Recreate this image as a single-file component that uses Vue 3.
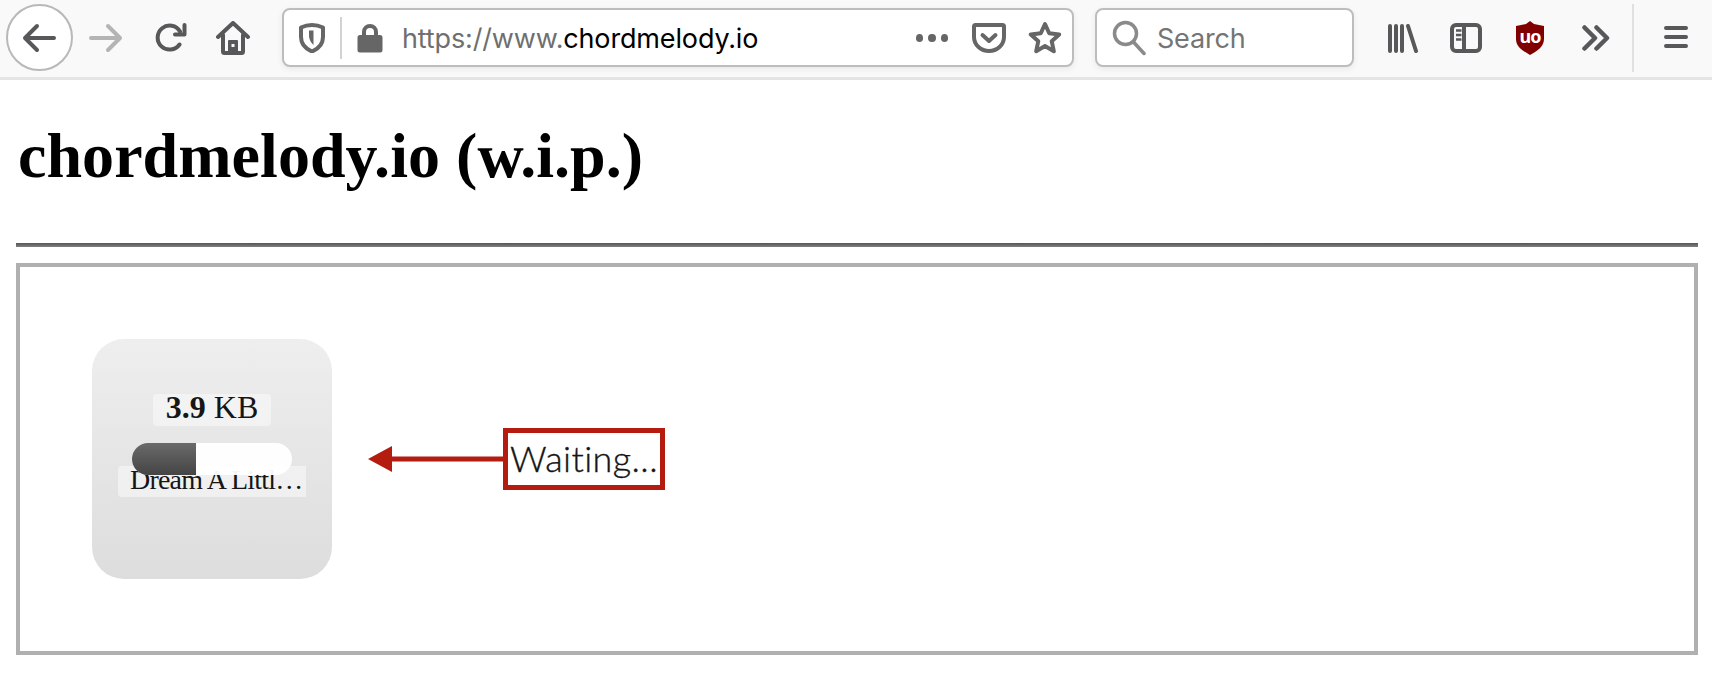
<script setup>
const title = 'chordmelody.io (w.i.p.)'
const progress = 40
</script>

<template>
  <div class="window">
    <header class="toolbar">
      <button class="nav back">
        <svg width="34" height="30" viewBox="0 0 34 30" class="ico"><path d="M32 15H3M15 3L3 15l12 12" /></svg>
      </button>
      <span class="slot forward">
        <svg width="34" height="30" viewBox="0 0 34 30" class="ico faded"><path d="M2 15h29M19 3l12 12-12 12" /></svg>
      </span>
      <span class="slot reload">
        <svg width="32" height="30" viewBox="0 0 32 30" class="ico"><path d="M24.500 21.500A12 12 0 1 1 25 8.500" /><path d="M29.500 2v9.500H20" /></svg>
      </span>
      <span class="slot home">
        <svg width="34" height="34" viewBox="0 0 34 34" class="ico">
          <path d="M2 16L17 2l15 14" />
          <path d="M7 14v16.500a1.500 1.500 0 0 0 1.500 1.500h17a1.500 1.500 0 0 0 1.500-1.500V14" />
          <rect class="solid" x="12" y="19" width="10" height="13" rx="1" />
          <rect class="cut" x="15.500" y="23" width="3" height="3" />
        </svg>
      </span>

      <div class="urlbar">
        <span class="shield">
          <svg width="26" height="30" viewBox="0 0 26 30" class="ico soft">
            <path d="M13 2c4 0 7.500 .8 11 2.500V14c0 7-5 12-11 14.500C7 26 2 21 2 14V4.500C5.500 2.800 9 2 13 2z" />
            <path class="solid-s" d="M14.500 7.500h-4.500V13c0 3 1.800 6.500 4.500 9z" />
          </svg>
        </span>
        <i class="divider"></i>
        <svg class="lock" width="26" height="30" viewBox="0 0 26 30">
          <path fill="#666" d="M5 12V9a8 8 0 0 1 16 0v3h2a2.500 2.500 0 0 1 2.500 2.500V27a2.500 2.500 0 0 1-2.500 2.500H3A2.500 2.500 0 0 1 .5 27V14.500A2.500 2.500 0 0 1 3 12zm4 0h8V9a4 4 0 0 0-8 0z" />
        </svg>
        <span class="url"><span class="scheme">https://www.</span>chordmelody.io</span>
        <span class="dots"><i></i><i></i><i></i></span>
        <svg class="pocket ico soft" width="34" height="30" viewBox="0 0 34 30">
          <path d="M3.500 2h27A1.500 1.500 0 0 1 32 3.500V14c0 8-7 14-15 14S2 22 2 14V3.500A1.500 1.500 0 0 1 3.500 2z" />
          <path d="M10.500 12l6.500 6 6.500-6" />
        </svg>
        <svg class="star ico soft" width="34" height="34" viewBox="0 0 34 34">
          <path d="M17 3l4.200 9.300 10 1.100-7.500 6.800 2.100 10L17 25.100 8.200 30.200l2.100-10-7.500-6.800 10-1.100z" />
        </svg>
      </div>

      <div class="searchbar">
        <svg class="glass" width="34" height="36" viewBox="0 0 34 36" fill="none" stroke="#8a8a8a" stroke-width="3.500" stroke-linecap="round">
          <circle cx="13.500" cy="13.500" r="11" />
          <path d="M21.500 22L32 33.500" />
        </svg>
        <span class="placeholder">Search</span>
      </div>

      <span class="slot library">
        <svg width="32" height="30" viewBox="0 0 32 30" class="ico"><path d="M2 3v25M8 3v25M14 3v25M20 3l8 25" /></svg>
      </span>
      <span class="slot sidebar">
        <svg width="32" height="30" viewBox="0 0 32 30" class="ico">
          <rect x="2" y="2" width="28" height="26" rx="4" />
          <path d="M14 2v26" />
          <path class="thin" d="M6 7.500h5.500M6 12h5.500M6 16.500h5.500" />
        </svg>
      </span>
      <span class="slot ublock">
        <svg width="30" height="34" viewBox="0 0 30 34">
          <path fill="#800000" d="M15 0l4 3 10 2v13c0 8-7 12-14 16C8 30 1 26 1 18V5l10-2z" />
          <text x="15" y="22" class="uo">uo</text>
        </svg>
      </span>
      <span class="slot overflow">
        <svg width="28" height="26" viewBox="0 0 28 26" class="ico thick"><path d="M2.500 2.500L13 13 2.500 23.500M14.500 2.500L25 13 14.500 23.500" /></svg>
      </span>
      <i class="tool-sep"></i>
      <span class="slot menu">
        <svg width="24" height="24" viewBox="0 0 24 24" class="ico"><path d="M2 3h20M2 12h20M2 21h20" /></svg>
      </span>
    </header>

    <main class="page">
      <h1 class="title">{{ title }}</h1>
      <hr class="rule" />
      <section class="stage">
        <div class="card">
          <div class="size"><b>3.9</b> KB</div>
          <div class="bar"><div class="fill" :style="{ width: progress + '%' }"></div></div>
          <div class="name">Dream A Littl…</div>
        </div>
        <div class="callout">
          <svg class="arrow" width="135" height="26" viewBox="0 0 135 26">
            <path fill="#b41c0f" d="M0 13L24 0v10.500h111v5H24V26z" />
          </svg>
          <div class="waiting">Waiting...</div>
        </div>
      </section>
    </main>
  </div>
</template>

<style>
html, body { margin: 0; background: #fff; overflow: hidden; }
</style>

<style scoped>
.window { width: 1712px; height: 685px; overflow: hidden; background: #fff; }

.toolbar {
  height: 78px;
  box-sizing: border-box;
  display: flex;
  align-items: flex-start;
  background: #f9f9f9;
  box-shadow: inset 0 -1px 0 #e6e6e6;
  position: relative;
}
.toolbar::after {
  content: "";
  position: absolute;
  left: 0;
  right: 0;
  bottom: -2px;
  height: 2px;
  background: #e4e4e4;
}
.ico { fill: none; stroke: #58585a; stroke-width: 4; stroke-linecap: round; stroke-linejoin: round; display: block; }
.ico.soft { stroke: #666; }
.ico.faded { stroke: #b4b4b4; }
.ico.thick { stroke-width: 4.500; }
.ico .solid { fill: #58585a; stroke: none; }
.ico .cut { fill: #f9f9f9; stroke: none; }
.ico .solid-s { fill: #666; stroke: none; }
.ico .thin { stroke-width: 2.500; stroke-linecap: butt; }

.nav {
  padding: 0;
  margin: 4px 0 0 6px;
  width: 67px;
  height: 67px;
  box-sizing: border-box;
  border: 2px solid #b8b8b8;
  border-radius: 50%;
  background: #fff;
  display: flex;
  align-items: center;
  justify-content: center;
}
.back svg { margin-right: 1px; }
.slot { display: block; flex: none; }
.forward { margin: 23px 0 0 16px; }
.reload { margin: 23px 0 0 32px; }
.home { margin: 21px 0 0 29px; }

.urlbar, .searchbar {
  height: 59px;
  margin-top: 8px;
  box-sizing: border-box;
  border: 2px solid #bdbdbd;
  border-radius: 8px;
  background: #fff;
  box-shadow: 0 2px 6px rgba(0, 0, 0, .07);
  display: flex;
  align-items: center;
  flex: none;
}
.urlbar { width: 792px; margin-left: 32px; }
.shield { margin-left: 15px; display: block; }
.divider { width: 2px; height: 42px; background: #d2d2d2; margin-left: 15px; }
.lock { margin-left: 15px; flex: none; }
.url {
  font: 27px/1 "Inter", "Liberation Sans", sans-serif;
  color: #000;
  margin-left: 19px;
  padding-top: 2px;
  white-space: nowrap;
  letter-spacing: -.15px;
  width: 514px;
  flex: none;
}
.scheme { color: #6f6f6f; }
.dots { display: flex; gap: 5px; width: 32px; flex: none; }
.dots i { width: 8px; height: 8px; border-radius: 50%; background: #666; }
.pocket { margin-left: 24px; flex: none; }
.star { margin-left: 22px; flex: none; }

.searchbar { width: 259px; margin-left: 21px; }
.glass { margin-left: 15px; flex: none; }
.placeholder {
  font: 27px/1 "Inter", "Liberation Sans", sans-serif;
  color: #757575;
  margin-left: 11px;
  padding-top: 2px;
  letter-spacing: -.2px;
}

.library { margin: 23px 0 0 34px; }
.sidebar { margin: 23px 0 0 30px; }
.ublock { margin: 21px 0 0 33px; }
.overflow { margin: 25px 0 0 37px; }
.tool-sep { width: 2px; height: 68px; margin: 4px 0 0 22px; background: #e0e0e0; flex: none; }
.menu { margin: 25px 0 0 30px; }

.uo { font: 700 18px "Noto Sans", sans-serif; letter-spacing: -1px; fill: #fff; text-anchor: middle; }

.page { padding: 0 14px 0 16px; }
.title {
  font: 700 64px/74px "Liberation Serif", serif;
  color: #000;
  margin: 41px 0 50px 2px;
  letter-spacing: .05px;
}
.rule {
  height: 4px;
  margin: 0;
  border: 0;
  background: linear-gradient(#555, #808080);
}
.stage {
  margin-top: 16px;
  height: 392px;
  box-sizing: border-box;
  border: 4px solid #b0b0b0;
  padding: 72px 0 0 72px;
  display: flex;
  align-items: flex-start;
}
.card {
  width: 240px;
  height: 240px;
  flex: none;
  border-radius: 32px;
  background: linear-gradient(#eee, #ddd);
  display: flex;
  flex-direction: column;
  align-items: center;
  padding-top: 55px;
  box-sizing: border-box;
  font-family: "Liberation Serif", serif;
  color: #161616;
}
.size {
  width: 118px;
  height: 32px;
  border-radius: 4px;
  background: rgba(255, 255, 255, .45);
  font-size: 32px;
  line-height: 26px;
  text-align: center;
  white-space: nowrap;
}
.bar {
  width: 160px;
  height: 32px;
  margin-top: 17px;
  border-radius: 16px;
  background: rgba(255, 255, 255, .95);
  overflow: hidden;
  position: relative;
  z-index: 1;
}
.fill { height: 100%; background: linear-gradient(#6a6a6a, #444); }
.name {
  width: 188px;
  height: 31px;
  margin-top: -9px;
  box-sizing: border-box;
  padding-left: 12px;
  border-radius: 4px 0 0 4px;
  background: rgba(255, 255, 255, .45);
  font-size: 28px;
  line-height: 27px;
  letter-spacing: -.8px;
  white-space: nowrap;
}
.callout { display: flex; align-items: center; margin: 89px 0 0 36px; }
.arrow { display: block; flex: none; }
.waiting {
  width: 162px;
  height: 62px;
  box-sizing: border-box;
  border: 5px solid #b41c0f;
  font: 300 36px/50px "Lato", "Noto Sans", sans-serif;
  font-variant-ligatures: none;
  letter-spacing: .4px;
  -webkit-text-stroke: .35px #151515;
  color: #151515;
  text-align: center;
  white-space: nowrap;
}
</style>
